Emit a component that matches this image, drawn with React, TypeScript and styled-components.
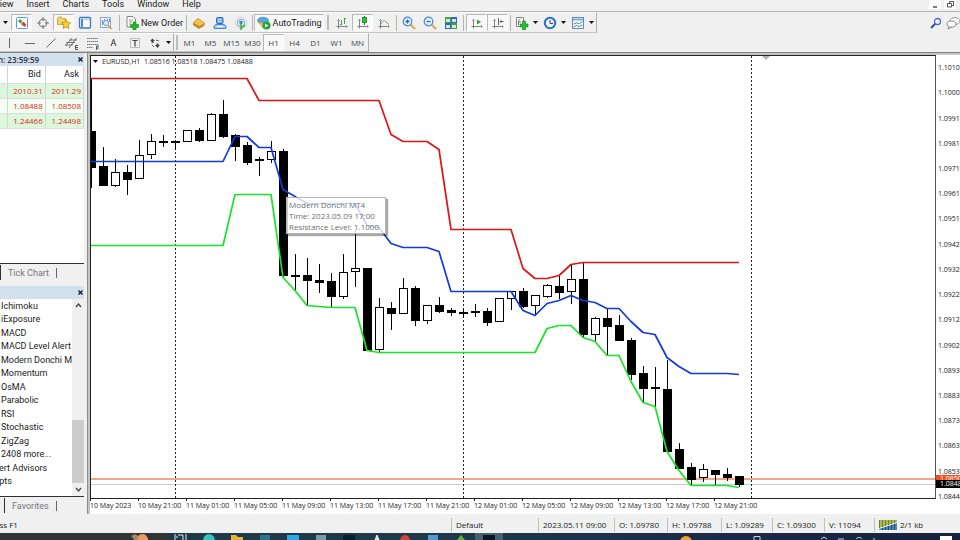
import React from "react";
import styled, { createGlobalStyle, css } from "styled-components";

const UI_FONT = `Roboto, "Open Sans", sans-serif`;

const GlobalStyle = createGlobalStyle`
  * { box-sizing: border-box; }
  html, body { margin: 0; padding: 0; overflow: hidden; }
  body, button { font-family: "Open Sans", "Noto Sans", sans-serif; font-size: 9px; color: #1a1a1a; }
  button { border: 0; background: none; padding: 0; margin: 0; }
  svg { display: block; flex: none; }
`;

/* ---------- shell ---------- */

const Shell = styled.div`
  display: flex;
  flex-direction: column;
  height: 100vh;
  overflow: hidden;
  background: #f0f0f0;
`;

const MenuBar = styled.nav`
  display: flex;
  justify-content: space-between;
  flex: none;
  height: 12px;
  border-bottom: 1px solid #b4b4b4;
`;

const MenuItems = styled.div`
  display: flex;
  gap: 13px;
  margin-left: -6px;
`;

const MenuButton = styled.button`
  height: 8px;
  line-height: 8px;
  font-family: ${UI_FONT};
  font-size: 9px;
`;

const WindowControls = styled.div`
  display: flex;
  gap: 3px;
  margin-right: 4px;
`;

const WindowButton = styled.button`
  display: grid;
  place-items: center;
  width: 12px;
  height: 9px;
  background: #fff;
`;

/* ---------- toolbars ---------- */

const ToolRow = styled.div<{ $height: number }>`
  display: flex;
  flex: none;
  height: ${(p) => p.$height}px;
`;

const ToolGroup = styled.div`
  display: flex;
  align-items: center;
  height: 100%;
  border-right: 1px solid #b0b0b0;
  border-bottom: 1px solid #c4c4c4;
  border-top: 1px solid #fbfbfb;
`;

const ToolButton = styled.button<{ $width?: number; $pressed?: boolean; $label?: boolean }>`
  display: flex;
  align-items: center;
  justify-content: center;
  gap: ${(p) => (p.$label ? 2 : 4)}px;
  flex: none;
  width: ${(p) => p.$width ?? 21}px;
  height: 17px;
  overflow: hidden;
  white-space: nowrap;
  font-family: ${UI_FONT};
  font-size: 9px;
  ${(p) =>
    p.$pressed &&
    css`
      background: #f8f8f8;
      border: 1px solid #b8b8b8;
      border-right-color: #fff;
      border-bottom-color: #fff;
    `}
`;

const PeriodButton = styled(ToolButton)`
  font-family: "Open Sans", "Noto Sans", sans-serif;
  font-size: 8px;
  color: #444;
`;

const Divider = styled.span<{ $space: number }>`
  flex: none;
  width: ${(p) => p.$space}px;
  height: 16px;
  background: linear-gradient(#b4b4b4, #b4b4b4) center / 1px 100% no-repeat;
`;

const Grip = styled.span<{ $width: number }>`
  flex: none;
  width: ${(p) => p.$width}px;
  height: 15px;
  background: linear-gradient(#bdbdbd, #bdbdbd) center / 2px 100% no-repeat;
`;

const RightTools = styled.div`
  display: flex;
  align-items: center;
  margin-left: auto;
`;

/* ---------- workspace ---------- */

const Workspace = styled.main`
  display: flex;
  flex: 1;
  min-height: 0;
  border-top: 1px solid #808080;
`;

const Sidebar = styled.aside`
  display: flex;
  flex-direction: column;
  flex: none;
  gap: 5px;
  width: 88px;
  padding-right: 3px;
  border-right: 1px solid #8c8c8c;
  overflow: hidden;
`;

const Panel = styled.section`
  display: flex;
  flex-direction: column;
  flex: 1 1 0;
  min-height: 0;
`;

const PanelTitle = styled.header`
  display: flex;
  align-items: center;
  justify-content: space-between;
  flex: none;
  height: 13px;
  background: #d3e1ef;
  font-size: 8px;
  font-weight: 600;
  color: #27313c;
`;

const CloseButton = styled.button`
  display: grid;
  place-items: center;
  width: 8px;
  height: 9px;
`;

const PanelBody = styled.div`
  display: flex;
  flex: 1;
  min-height: 0;
  background: #fff;
  border-bottom: 1px solid #303030;
`;

const QuoteTable = styled.table`
  width: 100%;
  border-collapse: collapse;
  table-layout: fixed;
  font-size: 8px;
  line-height: 10px;
  text-align: right;
  th, td { padding: 0 2px 0 0; border-right: 1px solid #d4d4d4; border-bottom: 1px solid #dcdcdc; }
  th { height: 17px; padding-right: 4px; font-family: ${UI_FONT}; font-weight: 400; font-size: 9px; }
  td { height: 15px; color: #e0261c; }
  th:first-child, td:first-child { width: 7px; padding: 0; }
  tbody tr { background: #f4fff4; }
  tbody tr:nth-child(odd) { background: #dcf8dc; }
`;

const TabStrip = styled.div`
  display: flex;
  align-items: center;
  flex: none;
  height: 17px;
`;

const TabButton = styled.button<{ $first: number }>`
  height: 15px;
  margin-left: ${(p) => p.$first}px;
  padding: 0 7px;
  border-left: 1px solid #303030;
  font-family: ${UI_FONT};
  font-size: 9px;
  color: #777;
  white-space: nowrap;
`;

const TabEnd = styled.span`
  width: 1px;
  height: 10px;
  background: #666;
`;

const IndicatorList = styled.ul`
  display: flex;
  flex-direction: column;
  flex: 1;
  min-width: 0;
  margin: 0;
  padding: 0 0 8px;
  overflow: hidden;
  list-style: none;
`;

const IndicatorItem = styled.li<{ $outdent?: boolean }>`
  display: flex;
  align-items: center;
  flex: 1;
  min-height: 0;
  margin-left: ${(p) => (p.$outdent ? -6 : 1)}px;
  white-space: nowrap;
  font-family: ${UI_FONT};
  font-size: 9px;
  line-height: 12px;
`;

const ScrollTrack = styled.div`
  display: flex;
  flex-direction: column;
  flex: none;
  align-items: center;
  width: 12px;
  padding: 4px 0;
  background: #f0f0f0;
`;

const ScrollSpace = styled.div`
  flex: 1;
`;

const ScrollThumb = styled.div`
  width: 100%;
  height: 63px;
  margin-bottom: 4px;
  background: #cdcdcd;
`;

/* ---------- chart ---------- */

const ChartWindow = styled.section`
  display: grid;
  grid-template-columns: 1fr 24px;
  grid-template-rows: 1fr 15px;
  flex: 1;
  min-width: 0;
  border-top: 2px solid #c4c4c4;
  border-left: 2px solid #c4c4c4;
  background: #fff;
  font-size: 7px;
`;

const Plot = styled.div`
  position: relative;
  min-width: 0;
  overflow: hidden;
  border: 1px solid #222;
  border-right-color: #555;
`;

const PlotSvg = styled.svg`
  width: 100%;
  height: 100%;
`;

const PlotTitle = styled.div`
  position: absolute;
  top: 1px;
  left: 2px;
  display: flex;
  align-items: center;
  gap: 4px;
  line-height: 9px;
  white-space: pre;
`;

const Tooltip = styled.div`
  position: absolute;
  top: 141px;
  left: 195px;
  padding: 1px 6px 1px 2px;
  border: 1px solid #b5b5b5;
  background: rgba(255, 255, 255, 0.8);
  box-shadow: 2px 2px 1px rgba(0, 0, 0, 0.35);
  font-size: 8px;
  line-height: 11px;
  color: #707070;
  white-space: nowrap;
`;

const PriceAxis = styled.div`
  position: relative;
  display: flex;
  flex-direction: column;
  grid-row: 1 / 3;
  grid-column: 2;
  padding-bottom: 5px;
  overflow: hidden;
`;

const PriceLabel = styled.div`
  display: flex;
  align-items: center;
  flex: 1;
  gap: 2px;
  min-height: 0;
  &::before {
    content: "";
    width: 2px;
    height: 1px;
    background: #222;
  }
`;

const PriceTag = styled.div<{ $top: number; $color: string }>`
  position: absolute;
  left: 0;
  right: 0;
  top: ${(p) => p.$top}px;
  height: 8px;
  padding-left: 4px;
  line-height: 8px;
  background: ${(p) => p.$color};
  color: #fff;
`;

const TimeAxis = styled.div`
  display: flex;
  min-width: 0;
`;

const TimeLabel = styled.div`
  flex: none;
  width: 48px;
  line-height: 10px;
  white-space: nowrap;
  &::before {
    content: "";
    display: block;
    width: 1px;
    height: 2px;
    background: #222;
  }
`;

/* ---------- status and task bar ---------- */

const StatusBar = styled.footer`
  display: flex;
  align-items: center;
  flex: none;
  height: 19px;
  padding-top: 2px;
  font-size: 8px;
`;

const StatusCell = styled.span<{ $width?: number }>`
  display: flex;
  align-items: center;
  gap: 3px;
  flex: ${(p) => (p.$width ? `0 0 ${p.$width}px` : "1")};
  height: 14px;
  padding-left: 4px;
  border-left: 1px solid #c0c0c0;
  white-space: nowrap;
  &:first-child { padding-left: 0; border-left: 0; }
`;

const HelpText = styled.span`
  margin-left: -5px;
`;

const ClockText = styled.span`
  margin-left: -2px;
`;

const TaskBar = styled.div`
  display: flex;
  flex: none;
  height: 7px;
  overflow: hidden;
  background: linear-gradient(90deg, #1f3a45, #1e3a4a 45%, #1b2a4a 75%, #17233c);
`;

const SearchBox = styled.div`
  display: flex;
  justify-content: flex-end;
  flex: none;
  width: 167px;
  padding-right: 16px;
  background: #333435;
`;

const TaskButton = styled.button<{ $active?: boolean }>`
  display: flex;
  justify-content: center;
  align-items: flex-start;
  flex: none;
  width: 28px;
  height: 7px;
  overflow: hidden;
  background: ${(p) => (p.$active ? "#46606c" : "transparent")};
`;

const Tray = styled.div`
  display: flex;
  justify-content: space-between;
  flex: 1;
  padding: 0 8px 0 176px;
`;

/* ---------- icons ---------- */

type IconProps = { children: React.ReactNode; w?: number; h?: number };
const Icon = ({ children, w = 14, h = 14 }: IconProps) => (
  <svg width={w} height={h} viewBox={`0 0 ${w} ${h}`} fill="none" aria-hidden="true">
    {children}
  </svg>
);

const Caret = () => (
  <Icon w={5} h={3}><path d="M0 0h5L2.5 3z" fill="#111" /></Icon>
);

const AxisBase = () => (
  <g stroke="#828282">
    <path d="M3.500 3v9.500M1.500 10.500h11" />
    <path d="M2 4.500h3M11.500 9v3" stroke="#a5a5a5" />
  </g>
);

const ICONS = {
  market: (
    <Icon>
      <rect x="1.500" y="1.500" width="11" height="11" rx="1" fill="#fff" stroke="#5c95e0" />
      <path d="M3 5l2-2 2.500 2.500-2 2z" fill="#2faa3c" />
      <path d="M6 8l2.500-2.500L11.500 9 9.500 11z" fill="#e2402f" />
    </Icon>
  ),
  crosshair: (
    <Icon>
      <circle cx="7" cy="7" r="3.800" stroke="#777" strokeWidth="1.100" />
      <path d="M7 1v4M7 9v4M1 7h4M9 7h4" stroke="#777" strokeWidth="1.100" />
    </Icon>
  ),
  navigator: (
    <Icon>
      <path d="M0.500 2.500l1-1.500h3l1 1.500h3v6h-8z" fill="#f4d568" stroke="#c79a2b" strokeWidth=".8" />
      <path d="M9 3.500l1.400 3 3.100.4-2.300 2.200.7 3.400L9 10.800l-2.900 1.700.6-3.400L4.500 6.900l3.100-.4z" fill="#fad22c" stroke="#b98513" strokeWidth=".8" />
    </Icon>
  ),
  terminal: (
    <Icon>
      <rect x="1.500" y="1.500" width="11" height="10.500" rx="1" fill="#f4f9ff" stroke="#3a78c4" strokeWidth="1.300" />
      <path d="M3 3h2v8H3z" fill="#4a87cf" />
      <path d="M5 3.500h7" stroke="#b9cfe8" />
    </Icon>
  ),
  tester: (
    <Icon>
      <rect x="1.500" y="1.500" width="10" height="10" fill="#edf4fb" stroke="#8caad0" />
      <path d="M3.500 9V4M5.500 8V3M8.500 5V3M10.500 6V3" stroke="#6d92c4" />
      <circle cx="7" cy="7" r="2.600" fill="#d7eafa" stroke="#7ea3cd" />
      <path d="M9 9l3.500 4" stroke="#d8a53a" strokeWidth="1.800" />
    </Icon>
  ),
  newOrder: (
    <Icon>
      <path d="M2 .5h6l2.500 2.500v8H2z" fill="#fff" stroke="#888" />
      <path d="M4 4h4M4 6h3M4 8h2" stroke="#999" />
      <path d="M8 6h3v2.500h2.500v3H11V14H8v-2.500H5.500v-3H8z" fill="#23b52b" stroke="#128a1b" strokeWidth=".6" />
    </Icon>
  ),
  gold: (
    <Icon>
      <path d="M1 7l5-4.500 7 5-1 2.500-5 3-6-4z" fill="#c98a1c" />
      <path d="M1 7l5-4.500 7 5L7.500 10.500z" fill="#f2c44d" stroke="#b77a16" strokeWidth=".6" />
    </Icon>
  ),
  community: (
    <Icon>
      <rect x="3.500" y="1.500" width="6.500" height="6" rx="1" fill="#6ba7ea" stroke="#2d6cbd" />
      <path d="M5 3.500h3.500M5 5.500h3.500" stroke="#d7e9fb" />
      <path d="M1 12.500V10l2-1.500h8l2 1.500v2.500z" fill="#a8cbf2" stroke="#4a87cf" />
      <path d="M4 10.500h6" stroke="#fff" />
    </Icon>
  ),
  signals: (
    <Icon>
      <circle cx="7" cy="7" r="5.800" stroke="#ccd8e4" />
      <circle cx="7" cy="7" r="3.600" stroke="#8db2d3" strokeWidth="1.200" />
      <circle cx="7" cy="6.500" r="1.700" fill="#3f83bf" />
      <path d="M7 8v6M7 12l4-3" stroke="#3fb54a" strokeWidth="1.600" />
    </Icon>
  ),
  auto: (
    <Icon>
      <ellipse cx="6" cy="4.500" rx="5.500" ry="3.300" fill="#58a6dd" stroke="#2f78b3" strokeWidth=".6" />
      <path d="M1 6l5 6 5-6c-3 1.500-7 1.500-10 0z" fill="#f0cb4c" stroke="#c49527" strokeWidth=".6" />
      <circle cx="9.500" cy="9.500" r="4" fill="#21a638" />
      <path d="M8 7.500l3.500 2L8 11.500z" fill="#fff" />
    </Icon>
  ),
  bars: (
    <Icon>
      <AxisBase />
      <path d="M6.500 4v5M5 8.500h1.500M9.500 2v6M9.500 2.500H11" stroke="#4a9c52" />
    </Icon>
  ),
  candles: (
    <Icon>
      <AxisBase />
      <path d="M8.500 0v9" stroke="#167d22" />
      <rect x="6.500" y="1.500" width="4" height="5" fill="#2fc03e" stroke="#167d22" strokeWidth=".8" />
    </Icon>
  ),
  line: (
    <Icon>
      <AxisBase />
      <path d="M4 8c2-4 3.500-4 5-2l3 2.500" stroke="#6aa870" />
    </Icon>
  ),
  zoomIn: (
    <Icon>
      <path d="M8 8l5 5" stroke="#dcb050" strokeWidth="2.400" />
      <circle cx="5.500" cy="5.500" r="4.300" fill="#e2f0fc" stroke="#4c8ad2" strokeWidth="1.200" />
      <path d="M3.500 5.500h4M5.500 3.500v4" stroke="#2869b8" strokeWidth="1.300" />
    </Icon>
  ),
  zoomOut: (
    <Icon>
      <path d="M8 8l5 5" stroke="#dcb050" strokeWidth="2.400" />
      <circle cx="5.500" cy="5.500" r="4.300" fill="#e2f0fc" stroke="#4c8ad2" strokeWidth="1.200" />
      <path d="M3.500 5.500h4" stroke="#2869b8" strokeWidth="1.300" />
    </Icon>
  ),
  tile: (
    <Icon>
      <rect x="1" y="1" width="6" height="6" fill="#47a336" />
      <rect x="7" y="1" width="6" height="6" fill="#2f68bd" />
      <rect x="1" y="7" width="6" height="6" fill="#2f68bd" />
      <rect x="7" y="7" width="6" height="6" fill="#47a336" />
      <path d="M2 3h4v3H2zM8 3h4v3H8zM2 9h4v3H2zM8 9h4v3H8z" fill="#cfe6f2" />
    </Icon>
  ),
  scroll: (
    <Icon>
      <AxisBase />
      <path d="M7 3.500l4 2.500-4 2.500z" fill="#28a236" />
    </Icon>
  ),
  shift: (
    <Icon>
      <AxisBase />
      <path d="M7.500 2v7M12.500 5.500H9M10.500 4L9 5.500 10.500 7" stroke="#666" />
    </Icon>
  ),
  indicators: (
    <Icon>
      <path d="M1.500 1.500h7v9h-7z" fill="#fff" stroke="#888" />
      <path d="M3.500 9V4.500L5.500 3M3 6h3" stroke="#777" />
      <path d="M7.500 5h3v3H13v3h-2.500v3h-3v-3H5V8h2.500z" fill="#2cba34" stroke="#128a1b" strokeWidth=".6" />
    </Icon>
  ),
  clock: (
    <Icon>
      <circle cx="7" cy="7" r="5.200" fill="#e7f2fd" stroke="#2c6fc4" strokeWidth="2" />
      <path d="M7 4v3.500h3" stroke="#445" />
    </Icon>
  ),
  template: (
    <Icon>
      <rect x="1.500" y="1.500" width="11" height="11" fill="#f3f8fd" stroke="#5d8fc4" />
      <path d="M2 3.500h10" stroke="#7fb0e0" strokeWidth="2" />
      <path d="M2.500 8l3-1 3 .5 3-2M2.500 11l3-1.500 3 1 3-1.500" stroke="#688" />
    </Icon>
  ),
  vline: <Icon><path d="M6.500 2v10" stroke="#666" /></Icon>,
  hline: <Icon><path d="M2 7.500h10" stroke="#666" /></Icon>,
  trend: <Icon><path d="M2.500 11.500l9-9" stroke="#666" /></Icon>,
  channel: (
    <Icon>
      <path d="M0.500 10L7 2M4 12l7.500-10M1 6.500h9M0 9h8M4 4h8" stroke="#666" strokeWidth=".9" />
      <path d="M13 9.500h-2.500v4H13M10.500 11.500H13" stroke="#444" strokeWidth=".9" />
    </Icon>
  ),
  fibo: (
    <Icon>
      <path d="M1 2.500h11M1 5.500h11M1 8.500h11M1 11.500h6" stroke="#777" strokeDasharray="1.500 .5" />
      <path d="M10.500 14v-4H13M10.500 12H13" stroke="#444" strokeWidth=".9" />
    </Icon>
  ),
  textbox: (
    <Icon>
      <rect x="2.500" y="2.500" width="9" height="9" stroke="#888" strokeDasharray="1 1" />
      <path d="M4.500 4.500h5M7 4.500v6" stroke="#444" strokeWidth="1.200" />
    </Icon>
  ),
  arrows: (
    <Icon>
      <path d="M2 5l2.500-2.500L7 5H5.500v2h-2V5zM7 9h1.500V7.500h2V9H12l-2.500 3z" fill="#444" />
      <path d="M8 4l3 1M4 9l2 2" stroke="#666" />
    </Icon>
  ),
  search: (
    <Icon w={12} h={12}>
      <path d="M1 11l4.500-4.500" stroke="#2d50ae" strokeWidth="2" />
      <circle cx="7.500" cy="4.500" r="3" fill="#f4f8ff" stroke="#4c6cc8" strokeWidth="1.300" />
    </Icon>
  ),
  chat: (
    <Icon>
      <ellipse cx="9" cy="5" rx="5" ry="3.500" fill="#fafafa" stroke="#999" />
      <ellipse cx="5.500" cy="8" rx="4.500" ry="3" fill="#fafafa" stroke="#888" />
      <path d="M3 10l-1 3 4-2" fill="#fafafa" stroke="#888" />
    </Icon>
  ),
  close: <Icon w={5} h={5}><path d="M.5.5l4 4M4.500.5l-4 4" stroke="#111" strokeWidth="1.200" /></Icon>,
};

/* ---------- data ---------- */

const MENUS = ["View", "Insert", "Charts", "Tools", "Window", "Help"];
const PERIODS = ["M1", "M5", "M15", "M30", "H1", "H4", "D1", "W1", "MN"];
const QUOTES = [["2010.31", "2011.29"], ["1.08488", "1.08508"], ["1.24466", "1.24498"]];
const INDICATORS = [
  "Ichimoku", "iExposure", "MACD", "MACD Level Alert", "Modern Donchi MT4", "Momentum",
  "OsMA", "Parabolic", "RSI", "Stochastic", "ZigZag", "2408 more...",
];
const PRICES = [
  "1.10105", "1.10005", "1.09910", "1.09810", "1.09710", "1.09615", "1.09515", "1.09420", "1.09320",
  "1.09220", "1.09125", "1.09025", "1.08930", "1.08830", "1.08730", "1.08635", "1.08535", "1.08440",
];
const TIMES = [
  "10 May 2023", "10 May 21:00", "11 May 01:00", "11 May 05:00", "11 May 09:00", "11 May 13:00",
  "11 May 17:00", "11 May 21:00", "12 May 01:00", "12 May 05:00", "12 May 09:00", "12 May 13:00",
  "12 May 17:00", "12 May 21:00",
];

/* high, body top, body bottom, low, rising */
type Candle = [number, number, number, number, 0 | 1];
const CANDLES: Candle[] = [
  [23, 76, 112, 132, 0], [92, 111, 130, 130, 0], [104, 117, 130, 131, 1], [110, 117, 124, 139, 0],
  [85, 100, 123, 123, 1], [79, 86, 99, 103, 1], [80, 86, 87, 91, 0], [86, 86, 87, 94, 0],
  [75, 75, 86, 86, 1], [73, 75, 85, 86, 0], [58, 59, 85, 85, 1], [45, 59, 81, 82, 0],
  [79, 80, 91, 105, 0], [87, 90, 107, 109, 0], [102, 104, 105, 120, 1], [86, 96, 104, 107, 1],
  [94, 96, 220, 221, 0], [199, 220, 221, 235, 0], [203, 220, 225, 250, 0], [209, 225, 227, 237, 0],
  [218, 226, 241, 251, 0], [199, 217, 241, 243, 1], [175, 213, 216, 231, 1], [213, 213, 295, 295, 0],
  [243, 252, 294, 297, 1], [247, 253, 258, 274, 0], [223, 233, 258, 258, 1], [231, 233, 265, 270, 0],
  [250, 250, 265, 268, 1], [242, 250, 256, 257, 0], [253, 255, 257, 260, 0], [253, 257, 258, 261, 0],
  [249, 256, 257, 261, 1], [253, 256, 267, 270, 0], [243, 243, 266, 266, 1], [236, 236, 243, 254, 1],
  [233, 236, 251, 252, 0], [240, 240, 250, 260, 1], [229, 230, 241, 242, 1], [220, 231, 237, 243, 0],
  [210, 224, 236, 248, 1], [207, 224, 279, 281, 0], [262, 263, 279, 286, 1], [253, 263, 271, 300, 0],
  [260, 270, 285, 285, 0], [283, 285, 319, 324, 0], [311, 318, 333, 346, 0], [312, 332, 333, 351, 0],
  [305, 334, 396, 396, 0], [388, 394, 413, 413, 0], [408, 412, 424, 430, 0], [409, 414, 422, 426, 1],
  [415, 415, 419, 430, 0], [413, 419, 422, 425, 0], [421, 421, 429, 431, 0],
];

/* channel lines: bar index, height */
type Point = [number, number];
const RESISTANCE: Point[] = [
  [0, 23], [13, 23], [14, 45], [24, 45], [25, 79], [26, 86], [28, 86], [29, 94], [30, 174], [35, 174],
  [36, 213], [37, 223], [38, 223], [39, 220], [40, 209], [41, 207], [54, 207],
];
const MIDDLE: Point[] = [
  [0, 106], [11, 106], [12, 81], [13, 81], [14, 92], [15, 92], [16, 134], [18, 148], [22, 148],
  [23, 170], [24, 172], [25, 188], [26, 192], [28, 192], [29, 196], [30, 236], [35, 236], [36, 255],
  [37, 260], [38, 248], [39, 245], [40, 240], [41, 245], [42, 247], [43, 253], [44, 253], [45, 266],
  [46, 277], [47, 279], [48, 302], [49, 311], [50, 318], [53, 318], [54, 319],
];
const SUPPORT: Point[] = [
  [0, 190], [11, 190], [12, 139], [15, 139], [16, 222], [17, 235], [18, 250], [20, 252], [22, 252],
  [23, 295], [24, 297], [37, 297], [38, 273], [39, 270], [40, 270], [41, 282], [42, 286], [43, 300],
  [44, 300], [45, 326], [46, 347], [47, 351], [48, 396], [49, 415], [50, 430], [53, 430], [54, 432],
];

const STEP = 12;
const toPoints = (line: Point[]) => line.map(([bar, y]) => `${bar * STEP},${y + 0.5}`).join(" ");

const PriceChart = () => (
  <PlotSvg role="img" aria-label="EURUSD hourly candles with Donchian channel">
    <g shapeRendering="crispEdges">
      <line x1="0" x2="100%" y1="423" y2="423" stroke="#f5a58c" strokeWidth="2" />
      <line x1="0" x2="100%" y1="428.500" y2="428.500" stroke="#c9cdd2" />
      {[7, 31, 55].map((bar) => (
        <line key={bar} x1={bar * STEP + 0.5} x2={bar * STEP + 0.5} y1="0" y2="100%" stroke="#222" strokeDasharray="2 2" />
      ))}
    </g>
    <g transform="translate(0 -1)">
      <g shapeRendering="crispEdges">
        {CANDLES.map(([high, top, bottom, low, up], i) => (
          <g key={i} stroke="#000">
            <line x1={i * STEP + 0.5} x2={i * STEP + 0.5} y1={high} y2={low + 1} />
            <rect x={i * STEP - 3.5} y={top + 0.5} width="8" height={bottom - top} fill={up ? "#fff" : "#000"} />
          </g>
        ))}
      </g>
      <g fill="none" strokeWidth="1.700" strokeLinejoin="round">
        <polyline points={toPoints(RESISTANCE)} stroke="#e01414" />
        <polyline points={toPoints(MIDDLE)} stroke="#1238e0" />
        <polyline points={toPoints(SUPPORT)} stroke="#18e428" />
      </g>
    </g>
    <path d="M671 0h8l-4 4z" fill="#b0b0b0" />
  </PlotSvg>
);

const TaskIcons: React.ReactNode[] = [
  <path d="M1 1v6M4 2h5v5M12 1v6M2 4h2" stroke="#dfe7ea" />,
  <path d="M1 8c0-9 12-9 12 0z" fill="#37c2c4" />,
  <path d="M1 2h5l2 2h5v4H1z" fill="#e8b339" />,
  <path d="M2 2h10v6H2z" fill="#2f7193" />,
  <path d="M1 2h12v6H1z" fill="#2ca7e4" />,
  <path d="M2 2h10v6H2z" fill="#7f98a2" />,
  <path d="M1 2h12v6H1z" fill="#0b1d33" />,
  <path d="M5 7l2-5 2 5z" fill="#f2e6a8" stroke="#eee" />,
  <path d="M2 8c0-8 10-8 10 0z" fill="#d8403d" />,
  <path d="M2 2h10v6H2z" fill="#4e9bd8" />,
  <path d="M3 7l4-5 4 5z" fill="#55b83e" />,
  <path d="M1 2h12v6H1z" fill="#0a1626" />,
];

/* ---------- page ---------- */

type ToolProps = { name: string; icon: React.ReactNode; $pressed?: boolean; $width?: number; caret?: boolean };
const Tool = ({ name, icon, caret, ...style }: ToolProps) => (
  <ToolButton aria-label={name} {...style}>
    {icon}
    {caret && <Caret />}
  </ToolButton>
);

export default function App() {
  return (
    <Shell>
      <GlobalStyle />
      <MenuBar>
        <MenuItems>
          {MENUS.map((m) => <MenuButton key={m}>{m}</MenuButton>)}
        </MenuItems>
        <WindowControls>
          <WindowButton aria-label="Minimize"><Icon w={6} h={6}><path d="M1 5h4" stroke="#444" strokeWidth="1.400" /></Icon></WindowButton>
          <WindowButton aria-label="Restore"><Icon w={7} h={7}><path d="M2.500 2.500v-2h4v4h-2M.5 2.500h4v3.500h-4z" stroke="#555" /></Icon></WindowButton>
        </WindowControls>
      </MenuBar>

      <ToolRow $height={21}>
        <ToolGroup>
          <Tool name="More" icon={<Caret />} $width={11} />
          <Tool name="Market Watch" icon={ICONS.market} $pressed />
          <Tool name="Data Window" icon={ICONS.crosshair} />
          <Tool name="Navigator" icon={ICONS.navigator} $pressed />
          <Tool name="Terminal" icon={ICONS.terminal} />
          <Tool name="Strategy Tester" icon={ICONS.tester} />
          <Divider $space={7} />
          <ToolButton $width={62} $label>{ICONS.newOrder}New Order</ToolButton>
          <Divider $space={3} />
          <Tool name="MetaEditor" icon={ICONS.gold} />
          <Tool name="Community" icon={ICONS.community} />
          <Tool name="Signals" icon={ICONS.signals} />
          <Divider $space={3} />
          <ToolButton $width={70} $label $pressed>{ICONS.auto}AutoTrading</ToolButton>
          <Grip $width={7} />
          <Tool name="Bar Chart" icon={ICONS.bars} />
          <Tool name="Candlesticks" icon={ICONS.candles} $pressed />
          <Tool name="Line Chart" icon={ICONS.line} />
          <Divider $space={4} />
          <Tool name="Zoom In" icon={ICONS.zoomIn} />
          <Tool name="Zoom Out" icon={ICONS.zoomOut} />
          <Tool name="Tile Windows" icon={ICONS.tile} />
          <Divider $space={5} />
          <Tool name="Auto Scroll" icon={ICONS.scroll} $pressed />
          <Tool name="Chart Shift" icon={ICONS.shift} $pressed />
          <Divider $space={4} />
          <Tool name="Indicators" icon={ICONS.indicators} $width={28} caret />
          <Tool name="Periods" icon={ICONS.clock} $width={28} caret />
          <Tool name="Templates" icon={ICONS.template} $width={28} caret />
        </ToolGroup>
        <RightTools>
          <Tool name="Search" icon={ICONS.search} />
          <ToolButton aria-label="Chat" $width={14}>{ICONS.chat}</ToolButton>
        </RightTools>
      </ToolRow>

      <ToolRow $height={19}>
        <ToolGroup>
          <Tool name="Vertical Line" icon={ICONS.vline} $width={19} />
          <Tool name="Horizontal Line" icon={ICONS.hline} />
          <Tool name="Trendline" icon={ICONS.trend} />
          <Tool name="Equidistant Channel" icon={ICONS.channel} />
          <Tool name="Fibonacci" icon={ICONS.fibo} />
          <ToolButton>A</ToolButton>
          <Tool name="Text Label" icon={ICONS.textbox} />
          <Tool name="Arrows" icon={ICONS.arrows} $width={28} caret />
        </ToolGroup>
        <ToolGroup>
          <Grip $width={5} />
          {PERIODS.map((p) => <PeriodButton key={p} $pressed={p === "H1"}>{p}</PeriodButton>)}
        </ToolGroup>
      </ToolRow>

      <Workspace>
        <Sidebar>
          <Panel>
            <PanelTitle>
              <ClockText>n: 23:59:59</ClockText>
              <CloseButton aria-label="Close">{ICONS.close}</CloseButton>
            </PanelTitle>
            <PanelBody>
              <div>
                <QuoteTable>
                  <thead><tr><th /><th scope="col">Bid</th><th scope="col">Ask</th></tr></thead>
                  <tbody>
                    {QUOTES.map(([bid, ask]) => <tr key={bid}><td /><td>{bid}</td><td>{ask}</td></tr>)}
                  </tbody>
                </QuoteTable>
              </div>
            </PanelBody>
            <TabStrip><TabButton $first={0}>Tick Chart</TabButton><TabEnd /></TabStrip>
          </Panel>
          <Panel>
            <PanelTitle>
              <span />
              <CloseButton aria-label="Close">{ICONS.close}</CloseButton>
            </PanelTitle>
            <PanelBody>
              <IndicatorList>
                {INDICATORS.map((name) => <IndicatorItem key={name}>{name}</IndicatorItem>)}
                <IndicatorItem $outdent>pert Advisors</IndicatorItem>
                <IndicatorItem $outdent>ripts</IndicatorItem>
              </IndicatorList>
              <ScrollTrack>
                <Icon w={7} h={5}><path d="M1 4l2.500-3L6 4" stroke="#444" strokeWidth="1.300" /></Icon>
                <ScrollSpace />
                <ScrollThumb />
                <Icon w={7} h={5}><path d="M1 1l2.500 3L6 1" stroke="#444" strokeWidth="1.300" /></Icon>
              </ScrollTrack>
            </PanelBody>
            <TabStrip><TabButton $first={4}>Favorites</TabButton><TabEnd /></TabStrip>
          </Panel>
        </Sidebar>

        <ChartWindow>
          <Plot>
            <PriceChart />
            <PlotTitle><Caret />{"EURUSD,H1  1.08516 1.08518 1.08475 1.08488"}</PlotTitle>
            <Tooltip role="tooltip">
              Modern Donchi MT4<br />Time: 2023.05.09 17:00<br />Resistance Level: 1.1000
            </Tooltip>
          </Plot>
          <PriceAxis>
            {PRICES.map((p) => <PriceLabel key={p}>{p}</PriceLabel>)}
            <PriceTag $top={420} $color="#f4501e">1.08508</PriceTag>
            <PriceTag $top={425} $color="#000">1.08488</PriceTag>
          </PriceAxis>
          <TimeAxis>
            {TIMES.map((t) => <TimeLabel key={t}>{t}</TimeLabel>)}
          </TimeAxis>
        </ChartWindow>
      </Workspace>

      <StatusBar>
        <StatusCell><HelpText>ess F1</HelpText></StatusCell>
        <StatusCell $width={87}>Default</StatusCell>
        <StatusCell $width={76}>2023.05.11 09:00</StatusCell>
        <StatusCell $width={53}>O: 1.09780</StatusCell>
        <StatusCell $width={54}>H: 1.09788</StatusCell>
        <StatusCell $width={51}>L: 1.09289</StatusCell>
        <StatusCell $width={52}>C: 1.09300</StatusCell>
        <StatusCell $width={50}>V: 11094</StatusCell>
        <StatusCell $width={86}>
          <Icon w={18} h={10}>
            <path d="M0 0h18v2L0 8z" fill="#a9b65a" />
            <path d="M18 3v7H0V9z" fill="#4f87ad" />
            <path d="M.5 0v8M3.500 0v7M6.500 0v6M9.500 0v5M12.500 0v4M15.500 0v3" stroke="#6f8418" />
            <path d="M3.500 8v2M6.500 7v3M9.500 6v4M12.500 5v5M15.500 4v6" stroke="#174f7c" />
          </Icon>
          2/1 kb
        </StatusCell>
      </StatusBar>

      <TaskBar>
        <SearchBox>
          <Icon w={20} h={8}>
            <path d="M0 3l4-2 3 2 3-2 5 1 2 6H4z" fill="#a08a6a" />
            <path d="M8 2l5-1 4 4v3H6z" fill="#ef9a63" />
          </Icon>
        </SearchBox>
        {TaskIcons.map((shape, i) => (
          <TaskButton key={i} $active={i === 11} aria-label={`Task ${i + 1}`}><Icon h={8}>{shape}</Icon></TaskButton>
        ))}
        <Tray>
          <Icon w={14} h={8}><circle cx="7" cy="9" r="6" fill="#f0a72c" /></Icon>
          <Icon w={8} h={8}><path d="M1 7V3.500h6V7" stroke="#ccd3dc" /></Icon>
          <Icon w={60} h={8}><path d="M1 6l3-2 3 2M18 6h6M36 6c1-2 5-2 6 0M54 5v2" stroke="#ccd3dc" /></Icon>
          <Icon w={12} h={8}><path d="M0 3h12v5H0z" fill="#fff" /></Icon>
        </Tray>
      </TaskBar>
    </Shell>
  );
}
